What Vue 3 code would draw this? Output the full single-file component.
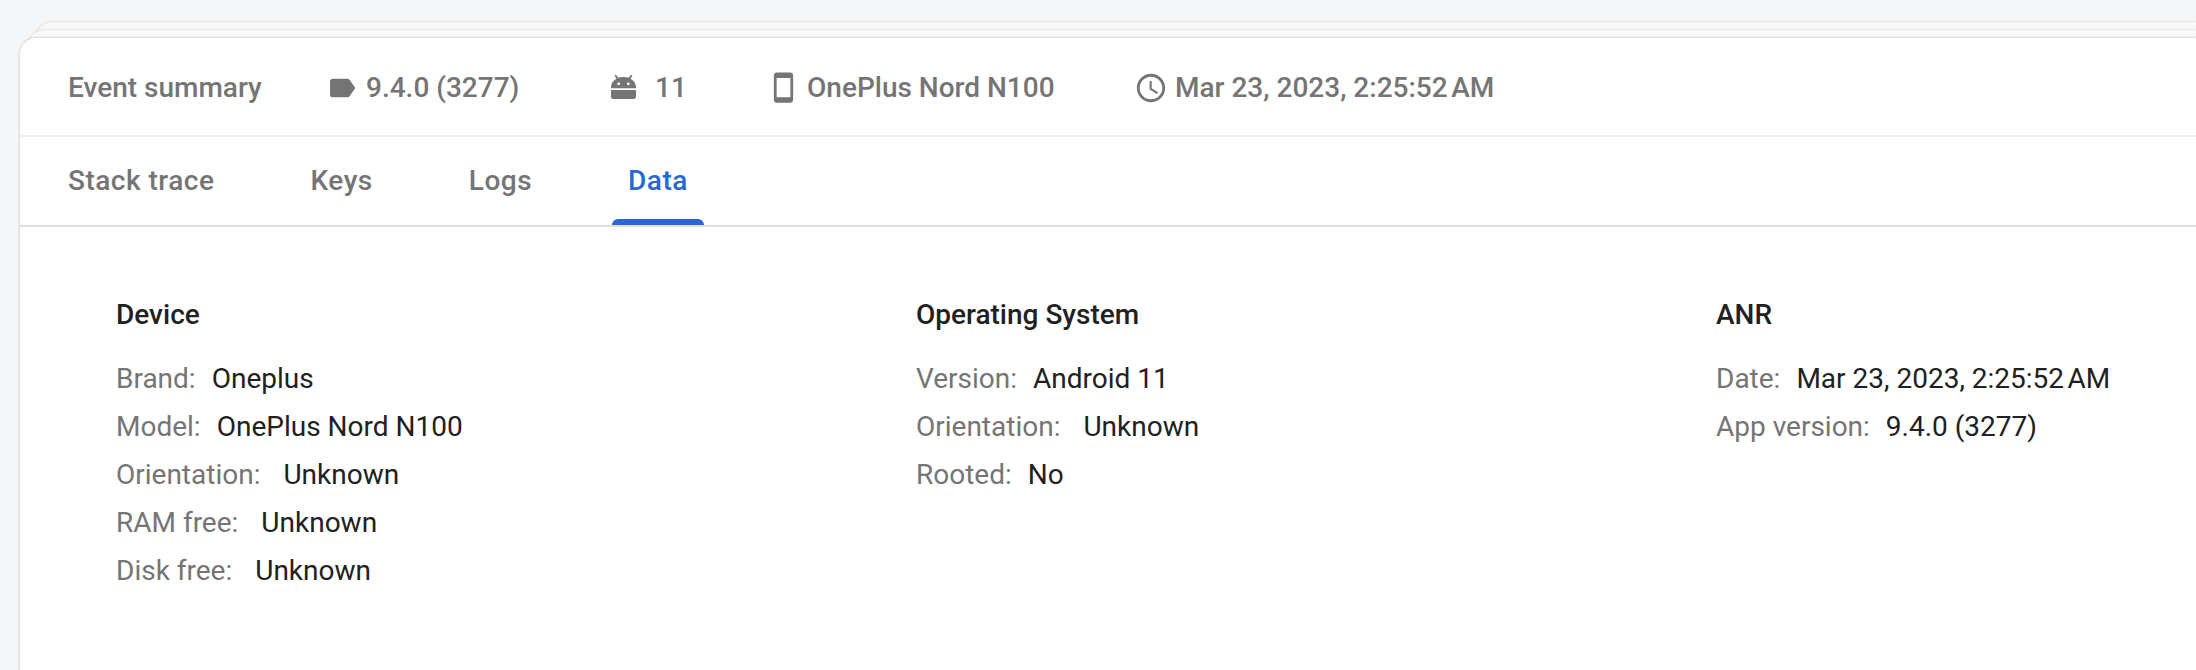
<script setup>
const tabs = [
  { name: 'Stack trace' },
  { name: 'Keys' },
  { name: 'Logs' },
  { name: 'Data', active: true },
]

const sections = [
  {
    title: 'Device',
    rows: [
      { label: 'Brand:', value: 'Oneplus' },
      { label: 'Model:', value: 'OnePlus Nord N100' },
      { label: 'Orientation:', value: 'Unknown', wide: true },
      { label: 'RAM free:', value: 'Unknown', wide: true },
      { label: 'Disk free:', value: 'Unknown', wide: true },
    ],
  },
  {
    title: 'Operating System',
    rows: [
      { label: 'Version:', value: 'Android 11' },
      { label: 'Orientation:', value: 'Unknown', wide: true },
      { label: 'Rooted:', value: 'No' },
    ],
  },
  {
    title: 'ANR',
    rows: [
      { label: 'Date:', value: 'Mar 23, 2023, 2:25:52\u202fAM' },
      { label: 'App version:', value: '9.4.0 (3277)' },
    ],
  },
]
</script>

<template>
  <div class="page">
    <div class="layer">
      <div class="layer layer-mid">
        <div class="card">
          <div class="summary">
            <span class="summary-title">Event summary</span>
            <span class="item item-version">
              <svg class="icon" width="32" height="32" viewBox="0 0 24 24"><path d="M17.63 5.84C17.27 5.33 16.67 5 16 5L5 5.01C3.9 5.01 3 5.9 3 7v10c0 1.1.9 1.99 2 1.99L16 19c.67 0 1.27-.33 1.63-.84L22 12l-4.37-6.16z"/></svg>
              9.4.0 (3277)
            </span>
            <span class="item item-os">
              <svg class="icon icon-android" width="25" height="25" viewBox="5 5 14 14"><path d="M5 14h14v3.8c0 .7-.5 1.2-1.2 1.2H6.200c-.7 0-1.200-.5-1.200-1.200zM5 13v-.5c0-2.300 1.300-3.900 3.100-4.800L7 6l.7-.6 1.500 1.700c.9-.3 1.800-.4 2.800-.4s1.900.1 2.800.4l1.500-1.700.7.6-1.100 1.700c1.800.9 3.100 2.500 3.100 4.800v.5zm4.300-1.700a.8.8 0 1 0 0-1.600.8.8 0 0 0 0 1.600zm5.400 0a.8.8 0 1 0 0-1.600.8.8 0 0 0 0 1.600z"/></svg>
              <span class="os-text">11</span>
            </span>
            <span class="item item-device">
              <svg class="icon" width="33" height="33" viewBox="0 0 24 24"><path d="M17 1.010 7 1c-1.100 0-2 .9-2 2v18c0 1.100.9 2 2 2h10c1.100 0 2-.9 2-2V3c0-1.100-.9-1.990-2-1.990zM17 19H7V5h10v14z"/></svg>
              OnePlus Nord N100
            </span>
            <span class="item item-time">
              <svg class="icon" width="34" height="34" viewBox="0 0 24 24"><path d="M11.99 2C6.47 2 2 6.48 2 12s4.47 10 9.99 10C17.52 22 22 17.52 22 12S17.52 2 11.99 2zM12 20c-4.42 0-8-3.58-8-8s3.58-8 8-8 8 3.58 8 8-3.58 8-8 8zm.5-13H11v6l5.25 3.15.75-1.23-4.5-2.67V7z"/></svg>
              Mar 23, 2023, 2:25:52&#8239;AM
            </span>
          </div>

          <div class="tabs">
            <span
              v-for="tab in tabs"
              :key="tab.name"
              class="tab"
              :class="{ active: tab.active }"
            >{{ tab.name }}</span>
          </div>

          <div class="data">
            <div v-for="section in sections" :key="section.title" class="section">
              <h3 class="section-title">{{ section.title }}</h3>
              <div
                v-for="row in section.rows"
                :key="row.label"
                class="row"
                :class="{ wide: row.wide }"
              >
                <span class="label">{{ row.label }}</span>
                <span class="value">{{ row.value }}</span>
              </div>
            </div>
          </div>
        </div>
      </div>
    </div>
  </div>
</template>

<style>
html, body {
  margin: 0;
  background: #f5f6f8;
  overflow: hidden;
}
</style>

<style scoped>
.page {
  height: 670px;
  overflow: hidden;
  background: #f5f6f8;
  padding: 22px 0 0 36px;
  box-sizing: border-box;
  font-family: Roboto, sans-serif;
}

.layer {
  background: #f8f8f8;
  border-radius: 16px 0 0 0;
  box-shadow: 0 0 2px rgba(0, 0, 0, 0.22);
  padding-top: 8px;
  height: 700px;
}

.layer-mid {
  margin-left: -8px;
}

.card {
  margin-left: -8px;
  background: #fff;
  border-radius: 16px 0 0 0;
  box-shadow: 0 0 3px rgba(0, 0, 0, 0.25);
  height: 700px;
}

.summary {
  height: 95px;
  display: flex;
  align-items: center;
  border-bottom: 2px solid #efefef;
  padding: 2px 0 0 48px;
  color: #757575;
  font-size: 28px;
  font-weight: 500;
  white-space: nowrap;
}

.summary-title {
  width: 258px;
}

.item {
  display: flex;
  align-items: center;
}

.icon {
  fill: #757575;
  flex: none;
}

.icon-android {
  margin-bottom: 2px;
}

.item-version {
  gap: 8px;
  width: 285px;
}

.item-os {
  width: 156px;
}

.os-text {
  margin-left: 19px;
}

.item-device {
  gap: 7px;
  width: 367px;
}

.item-time {
  gap: 7px;
}

.tabs {
  height: 88px;
  display: flex;
  gap: 64px;
  padding-left: 32px;
  border-bottom: 2px solid #e0e0e0;
}

.tab {
  position: relative;
  display: flex;
  align-items: center;
  padding: 0 16px 2px;
  font-size: 28px;
  font-weight: 500;
  letter-spacing: 0.5px;
  color: #757575;
}

.tab.active {
  color: #2b66d2;
}

.tab.active::after {
  content: '';
  position: absolute;
  left: 0;
  right: 0;
  bottom: 0;
  height: 6px;
  background: #2b66d2;
  border-radius: 6px 6px 0 0;
}

.data {
  display: flex;
  padding: 71px 0 0 96px;
}

.section {
  width: 800px;
  flex: none;
}

.section-title {
  margin: 0 0 22px;
  font-size: 28px;
  line-height: 34px;
  font-weight: 500;
  color: #212121;
}

.row {
  display: flex;
  gap: 16px;
  height: 48px;
  align-items: center;
  font-size: 28px;
  white-space: nowrap;
}

.row.wide {
  gap: 23px;
}

.label {
  color: #757575;
}

.value {
  color: #212121;
}
</style>
